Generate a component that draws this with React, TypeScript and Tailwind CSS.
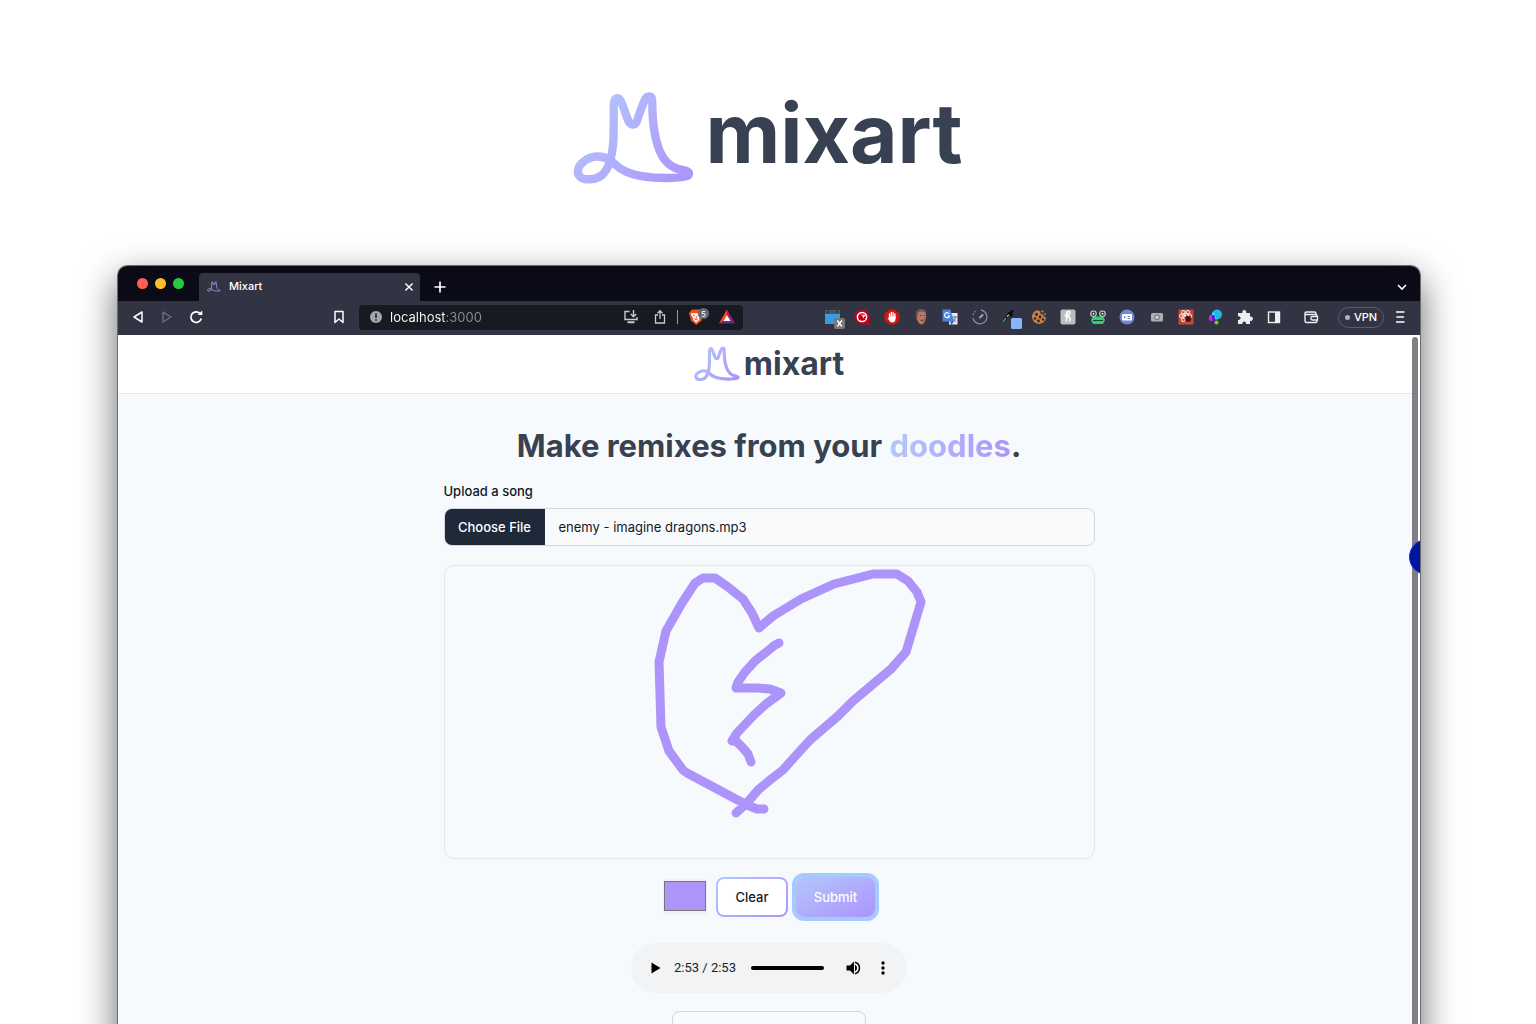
import React, { useId } from "react";

const LOGO_PATH =
  "M162 75C161 110 163 150 160 190C157 225 150 262 128 282C110 298 80 299 66 292C48 282 52 258 72 243C95 224 128 224 150 238C163 247 172 262 200 274C240 291 290 293 335 292C362 291 387 288 387 280C387 271 372 269 357 266C330 259 308 238 295 200C279 155 277 110 277 62C277 44 263 44 255 58C244 82 238 102 231 122C226 136 212 135 206 122C198 104 193 84 184 64C177 47 162 50 162 75Z";

function Logo({ className }: { className: string }) {
  const id = useId();
  return (
    <svg viewBox="40 32 362 280" className={className} fill="none" aria-hidden="true">
      <defs>
        <linearGradient id={id} x1="80" y1="60" x2="380" y2="310" gradientUnits="userSpaceOnUse">
          <stop stopColor="#b4c6fc" />
          <stop offset="1" stopColor="#ac94fa" />
        </linearGradient>
      </defs>
      <path d={LOGO_PATH} stroke={`url(#${id})`} strokeWidth="25" strokeLinejoin="round" />
    </svg>
  );
}

function IconButton({ label, children }: { label: string; children: React.ReactNode }) {
  return (
    <button aria-label={label} className="flex size-5 shrink-0 items-center justify-center">
      {children}
    </button>
  );
}

function Svg({ children, className = "size-5" }: { children: React.ReactNode; className?: string }) {
  return (
    <svg viewBox="0 0 20 20" className={className} fill="none" aria-hidden="true">
      {children}
    </svg>
  );
}

const extensions: { name: string; art: React.ReactNode }[] = [
  {
    name: "Window resizer",
    art: (
      <>
        <rect x="2" y="3" width="15" height="14" fill="#3b9be0" />
        <rect x="2" y="3" width="15" height="4" fill="#4d565e" />
        <path d="M5 4v2M14 4v2" stroke="#22282e" strokeWidth="1.5" />
        <rect x="11" y="11" width="11" height="11" rx="2" fill="#777" />
        <path d="M14.300 13.500l4.600 6M18.900 13.500l-4.600 6" stroke="#fff" strokeWidth="1.300" />
      </>
    ),
  },
  {
    name: "Capture",
    art: (
      <>
        <path d="M10 2.500a7.500 7.500 0 1 1 0 15a7.500 7.500 0 0 1 0-15zM10 10h7.500v7.500H10z" fill="#c4001a" />
        <circle cx="10" cy="10" r="4.600" stroke="#fff" strokeWidth="1.500" />
        <path d="M7 7.500l3.500 1 .5 3 2.500-3.500z" fill="#fff" />
      </>
    ),
  },
  {
    name: "Ad blocker",
    art: (
      <>
        <path d="M7 2.500h6L17.500 7v6L13 17.500H7L2.500 13V7z" fill="#d31414" />
        <path d="M7.500 11V7M9.300 10V5.500M11.100 10V5.500M12.900 11V7" stroke="#fff" strokeWidth="1.300" strokeLinecap="round" />
        <path d="M6.900 9.500h6.600v3q-.5 3-3.300 3-2 0-3.300-2.500l-1.500-2 1.500.2z" fill="#fff" />
      </>
    ),
  },
  {
    name: "Portrait",
    art: (
      <>
        <path d="M5 7c0-4 3-5 6-4.500 3 0 4.500 2 4 5.500 0 5-1.500 9-4.500 9.500C7 17 5 11 5 7z" fill="#b57a66" />
        <path d="M5 8c-.5-4 2-6 5-6 3 0 5 2 5 4-3-2-6-2-8 0l-.5 6z" fill="#74564d" />
        <path d="M9 8.500h1.500M12.500 8.500H14M9.500 13q2 1.500 4-.5" stroke="#613a33" />
      </>
    ),
  },
  {
    name: "Translate",
    art: (
      <>
        <path d="M9 6h8.500v11.500H9z" fill="#e6e8ec" />
        <path d="M12 10h5M14.500 9v1.500M16 10q-1 4-4 5M13 11.500l3 3.500" stroke="#777f8b" />
        <path d="M2.500 2.500h8l3.500 12H2.500z" fill="#4c83df" />
        <path d="M10 14.500h4l-2.500 3z" fill="#2458ad" />
        <path d="M9.300 7A2.500 2.500 0 1 0 9.500 9H7.500" stroke="#fff" strokeWidth="1.200" />
      </>
    ),
  },
  {
    name: "Speed",
    art: (
      <>
        <path d="M11 3a7 7 0 1 1-8 8" stroke="#8e9098" strokeWidth="1.300" />
        <path d="M3 8a7 7 0 0 1 4-4.500" stroke="#8e9098" strokeWidth="1.300" strokeDasharray="1.500 1.500" />
        <path d="M10 10.500L12.500 8" stroke="#a4a6ad" strokeWidth="2" strokeLinecap="round" />
      </>
    ),
  },
  {
    name: "Colour picker",
    art: (
      <>
        <path d="M4 15l7-9" stroke="#111" strokeWidth="2.500" />
        <path d="M4 15l3-4" stroke="#2dbd55" strokeWidth="1.300" />
        <path d="M8 10l2-2.500" stroke="#d5d8dc" strokeWidth="1.200" />
        <path d="M9.500 5.500l4 3.500M11.500 6l2.500-2.500" stroke="#0b0c10" strokeWidth="2.500" />
        <rect x="12" y="11" width="11" height="11" rx="1.500" fill="#8ab4f8" />
      </>
    ),
  },
  {
    name: "Cookies",
    art: (
      <>
        <path d="M9 3a7 7 0 1 0 8 7c-2 .3-3-1-2.500-2.500C12 8 10.500 6 11.500 4 10 4 9 4 9 3z" fill="#c47f4e" />
        <g fill="#37251f">
          <circle cx="7.500" cy="7.500" r="1.400" /><circle cx="11" cy="10" r="1.400" /><circle cx="6" cy="11.500" r="1.300" />
          <circle cx="9.500" cy="14" r="1.400" /><circle cx="14" cy="12.500" r="1.200" />
        </g>
        <g fill="#c47f4e">
          <circle cx="13.500" cy="4.500" r="1.100" /><circle cx="16" cy="7" r="1" />
        </g>
      </>
    ),
  },
  {
    name: "Coupons",
    art: (
      <>
        <rect x="2.500" y="2.500" width="15" height="15" rx="2" fill="#bebebe" />
        <path d="M8.500 14.500V7q0-2.500 2-2.500T11.500 7Q10.500 8.500 6.500 8.500M8.500 11q3.500-2.500 3.500.5v3" stroke="#fff" strokeWidth="1.500" />
      </>
    ),
  },
  {
    name: "Frog",
    art: (
      <>
        <path d="M5 9.500h10l2 3.500-2 4H5l-2-4z" fill="#36cc72" />
        <path d="M5 13.500h10" stroke="#13442a" strokeWidth="1.200" />
        <circle cx="5.500" cy="6.800" r="3.300" fill="#c9d8ce" /><circle cx="14.500" cy="6.800" r="3.300" fill="#c9d8ce" />
        <circle cx="5.500" cy="6.800" r="2.200" fill="#263238" /><circle cx="14.500" cy="6.800" r="2.200" fill="#263238" />
        <circle cx="5.500" cy="6.800" r="1" fill="#e8eeea" /><circle cx="14.500" cy="6.800" r="1" fill="#e8eeea" />
      </>
    ),
  },
  {
    name: "Cards",
    art: (
      <>
        <circle cx="10" cy="10" r="7.500" fill="#7088d2" />
        <rect x="5" y="7" width="10" height="6.500" rx="1" fill="#fff" />
        <path d="M7 9l2 1.200L7 11.500z" fill="#5069b3" />
        <path d="M10.500 9.500h2.500M10.500 11.500h2.500" stroke="#5069b3" strokeWidth=".8" />
      </>
    ),
  },
  {
    name: "Camera",
    art: (
      <>
        <rect x="4" y="6" width="12" height="8.500" rx="1.500" fill="#b0b0b0" />
        <circle cx="10" cy="10.200" r="2.400" stroke="#808080" strokeWidth="1.200" /><circle cx="10" cy="10.200" r="1.300" fill="#d8d8d8" />
      </>
    ),
  },
  {
    name: "React tools",
    art: (
      <>
        <rect x="2.500" y="2.500" width="15" height="15" fill="#d0453a" />
        <g stroke="#f9dfdb" strokeWidth="1.100">
          <ellipse cx="9.500" cy="9" rx="6" ry="2.500" /><ellipse cx="9.500" cy="9" rx="6" ry="2.500" transform="rotate(60 9.500 9)" /><ellipse cx="9.500" cy="9" rx="6" ry="2.500" transform="rotate(120 9.500 9)" />
        </g>
        <ellipse cx="12" cy="12" rx="2.500" ry="3" fill="#301617" />
        <path d="M8.500 12h7M9 9.500l6 5M9 14.500l6-5" stroke="#301617" />
        <circle cx="9" cy="8.500" r="1.200" fill="#fff" />
      </>
    ),
  },
  {
    name: "Palette",
    art: (
      <>
        <circle cx="12" cy="7.500" r="5" fill="#22b8e8" />
        <path d="M8 4.500a5 5 0 0 0 4 8z" fill="#52dfe2" />
        <circle cx="7" cy="11" r="3.200" fill="#d81ddd" /><path d="M7 8a3 3 0 0 1 0 6z" fill="#3c25e8" />
        <circle cx="11.500" cy="15.500" r="2" fill="#72cf2c" />
      </>
    ),
  },
  {
    name: "Extensions",
    art: (
      <path d="M3 6h4.500C6.500 2 12 2 11.200 6H15v3.500c4-.5 4 5 0 4.500v3h-4c.5-3.500-4-3.500-3.600 0H3v-4c3.500.5 3.500-4 0-3.600z" fill="#eeeef1" />
    ),
  },
  {
    name: "Side panel",
    art: (
      <>
        <rect x="4.500" y="5" width="11" height="10.500" stroke="#f1f1f3" strokeWidth="1.400" />
        <path d="M11 5h4.500v10.500H11z" fill="#f1f1f3" />
      </>
    ),
  },
];

function TabStrip() {
  return (
    <div className="flex h-[35px] items-end bg-[#0b0b17] pr-3">
      <div className="flex h-[35px] items-center gap-[7px] pl-[19px]">
        <span className="size-[11px] rounded-full bg-[#ff5f57]" />
        <span className="size-[11px] rounded-full bg-[#febc2e]" />
        <span className="size-[11px] rounded-full bg-[#28c840]" />
      </div>
      <div className="ml-[15px] flex h-7 w-[221px] items-center rounded-t-[4px] bg-[#323443] pr-px pl-2">
        <Logo className="w-[14px] opacity-80" />
        <span className="ml-2 flex-1 text-[11px] font-medium text-white">Mixart</span>
        <IconButton label="Close tab">
          <Svg className="size-4"><path d="M5.500 5.500l9 9M14.500 5.500l-9 9" stroke="#fff" strokeWidth="1.800" /></Svg>
        </IconButton>
      </div>
      <div className="flex h-7 flex-1 items-center justify-between pr-px pl-2.5">
        <IconButton label="New tab">
          <Svg><path d="M10 4.500v11M4.500 10h11" stroke="#fff" strokeWidth="1.700" /></Svg>
        </IconButton>
        <div className="-mr-[5px] flex">
          <IconButton label="Search tabs">
            <Svg><path d="M6 8l4 4 4-4" stroke="#fff" strokeWidth="1.600" /></Svg>
          </IconButton>
        </div>
      </div>
    </div>
  );
}

function Toolbar() {
  return (
    <div className="flex h-[34px] items-center bg-[#323443] pb-px">
      <div className="flex items-center gap-[9px] pl-[10px]">
        <IconButton label="Back">
          <Svg><path d="M14 5v10L6 10z" stroke="#fff" strokeWidth="1.500" strokeLinejoin="round" /></Svg>
        </IconButton>
        <IconButton label="Forward">
          <Svg><path d="M6 5v10l8-5z" stroke="#6e707c" strokeWidth="1.300" strokeLinejoin="round" /></Svg>
        </IconButton>
        <IconButton label="Reload">
          <Svg>
            <path d="M14.500 7A5.300 5.300 0 1 0 15.300 11.500" stroke="#fff" strokeWidth="1.700" />
            <path d="M11.500 8h4.800V3.500z" fill="#fff" />
          </Svg>
        </IconButton>
      </div>
      <div className="ml-[123px]">
        <IconButton label="Bookmark">
          <Svg><path d="M6 4.500h8v11l-4-3.500-4 3.500z" stroke="#fff" strokeWidth="1.500" strokeLinejoin="round" /></Svg>
        </IconButton>
      </div>
      <div className="ml-[10px] flex h-[25px] w-[384px] items-center rounded-[4px] bg-[#171a21] pr-[6px] pl-[7px]">
        <Svg>
          <circle cx="10" cy="10" r="6" fill="#a3a5ae" />
          <path d="M10 6.500v4.500M10 12.300v1.500" stroke="#171a21" strokeWidth="1.500" />
        </Svg>
        <input
          aria-label="Address"
          defaultValue="localhost:3000"
          className="ml-1 h-5 min-w-0 flex-1 bg-linear-to-r from-white from-[55px] to-[#8c8e96] to-[56px] bg-clip-text text-[13px] leading-5 text-transparent outline-none"
        />
        <div className="flex items-center gap-[9px]">
          <IconButton label="Install">
            <Svg>
              <path d="M8.500 4.500H4v8h12v-2.500M12.500 3v6.500M9.800 7l2.700 2.700L15.200 7" stroke="#c9cad0" strokeWidth="1.400" />
              <path d="M6.500 15.300h7" stroke="#c9cad0" strokeWidth="2" />
            </Svg>
          </IconButton>
          <IconButton label="Share">
            <Svg><path d="M8 8H5.500v8h9V8H12M10 12V4M7.500 6.200L10 3.700l2.500 2.500" stroke="#c9cad0" strokeWidth="1.300" /></Svg>
          </IconButton>
        </div>
        <span className="ml-[7px] h-[14px] w-px bg-[#9a9ca5]" />
        <div className="ml-[9px] flex items-center gap-[10px]">
          <IconButton label="Brave shields">
            <Svg className="size-5 overflow-visible">
              <path d="M5 2.500h8l3 3.500-1.500 7.500L9.200 18 4 13.500 2 6z" fill="#f4511e" />
              <path d="M4.500 6l2.500.2h4.500L14 6l.5 2-2.500 3 .5 1.500-3.300 3.200L6 12.500l.5-1.500L4 8z" fill="#fff" />
              <path d="M6 8l2 .8M12.500 8l-2 .8M9.200 9v3.500M7.500 12l1.700 1 1.700-1" stroke="#f4511e" strokeWidth="1" />
              <circle cx="16.500" cy="6.500" r="5.600" fill="#606777" />
              <text x="16.500" y="9.500" textAnchor="middle" fill="#fff" fontSize="8" fontFamily="Inter, sans-serif">5</text>
            </Svg>
          </IconButton>
          <IconButton label="Brave rewards">
            <Svg>
              <path d="M10 2.500L2 16.500l8-4.500z" fill="#ff4724" />
              <path d="M10 2.500l8 14-8-4.500z" fill="#9e1f63" />
              <path d="M2 16.500h16L10 11.500z" fill="#662d91" />
              <path d="M10 8l3.500 6h-7z" fill="#fff" />
            </Svg>
          </IconButton>
        </div>
      </div>
      <div className="flex-1" />
      <div className="flex w-[471px] shrink-0">
        {extensions.map((e) => (
          <button key={e.name} aria-label={e.name} className="flex flex-1 items-center justify-center">
            <Svg className="size-5 overflow-visible">{e.art}</Svg>
          </button>
        ))}
      </div>
      <div className="flex items-center pr-[10px] pl-3">
        <IconButton label="Wallet">
          <Svg>
            <path d="M15 7V6.500q0-1.500-1.500-1.500h-8Q4 5 4 6.200T5.500 7.500H14.500q1.500 0 1.500 1.500v5q0 1.500-1.500 1.500h-9Q4 15.500 4 14V6.500" stroke="#eeeef1" strokeWidth="1.400" />
            <path d="M16.500 9.500h-5a1.600 1.600 0 0 0 0 3.500h5z" fill="#323443" stroke="#eeeef1" strokeWidth="1.300" />
          </Svg>
        </IconButton>
        <button className="ml-[17px] flex h-[21px] w-[46px] items-center justify-center gap-1 rounded-full border border-[#5c5e6b] text-[11px] font-medium text-white">
          <span className="size-[5px] rounded-full bg-[#b0b2bd]" />
          VPN
        </button>
        <div className="ml-[6px]">
          <IconButton label="Menu">
            <Svg><path d="M6 5h8.500M6.500 10h7.500M6 15h8.500" stroke="#fff" strokeWidth="1.500" /></Svg>
          </IconButton>
        </div>
      </div>
    </div>
  );
}

function Doodle() {
  return (
    <svg viewBox="445 566 649 292" className="block w-full" fill="none" stroke="#ac94fa" strokeWidth="9" strokeLinecap="round" strokeLinejoin="round" role="img" aria-label="Broken heart doodle">
      <path d="M764 809L757 809L747 805L687 773L683 770L669 751L661 727L659 662L666 631L682 603L695 583L703 578L715 578L728 587L743 599L752 613L759 628L773 616L801 599L834 584L873 574L897 574L908 581L917 592L921 602L906 652L891 669L853 701L838 716L810 740L790 762L783 770L770 780L758 790L747 803L736 813" />
      <path d="M779 643l-4 2-20 16-10 11-7 10-2 6h21l13 1 11 4-15 11-12 11-17 18-5 8h4l7 7 5 6 3 8" />
    </svg>
  );
}

function Player() {
  return (
    <div className="mt-[22px] flex h-[50px] w-[276px] items-center rounded-full bg-[#f1f3f4] pr-[14px] pl-[14px]">
      <IconButton label="Play">
        <Svg><path d="M6.500 4.500v11l9-5.500z" fill="#000" /></Svg>
      </IconButton>
      <span className="ml-[9px] font-[Roboto,sans-serif] text-[13px] text-[#222]">2:53 / 2:53</span>
      <input type="range" aria-label="Seek" min={0} max={173} defaultValue={173} className="mx-[15px] h-1 min-w-0 flex-1 appearance-none rounded-full bg-black [&::-webkit-slider-thumb]:size-0 [&::-webkit-slider-thumb]:appearance-none" />
      <div className="ml-1 flex items-center gap-[10px]">
        <IconButton label="Mute">
          <Svg>
            <path d="M3.500 7.500v5H7l4 4V3.500l-4 4z" fill="#000" />
            <path d="M12 6.500q2 1 2 3.500t-2 3.500z" fill="#000" />
            <path d="M12 4.200a6 6 0 0 1 0 11.600" stroke="#000" strokeWidth="1.500" />
          </Svg>
        </IconButton>
        <IconButton label="More options">
          <Svg><circle cx="10" cy="5" r="1.700" fill="#000" /><circle cx="10" cy="10" r="1.700" fill="#000" /><circle cx="10" cy="15" r="1.700" fill="#000" /></Svg>
        </IconButton>
      </div>
    </div>
  );
}

export default function App() {
  return (
    <div className="flex h-screen flex-col overflow-hidden bg-white font-[Inter,sans-serif]">
      <div className="flex shrink-0 items-start justify-center gap-[11px] pt-[84px] pb-20">
        <Logo className="mt-[7px] w-[121px]" />
        <span className="text-[82px] leading-[100px] font-bold text-[#374151]">mixart</span>
      </div>

      <div className="mr-[115px] ml-[117px] flex flex-1 flex-col rounded-t-[10px] shadow-[0_14px_36px_rgba(0,0,0,0.6)]">
        <div className="relative flex flex-1 flex-col overflow-hidden rounded-t-[10px] border border-b-0 border-[#6b6b70] bg-[#f7fafd]">
          <TabStrip />
          <Toolbar />
          <header className="flex h-[59px] shrink-0 items-center justify-center gap-1 border-b border-gray-200 bg-white">
            <Logo className="w-[46px]" />
            <span className="text-[32px] leading-10 font-bold text-[#374151]">mixart</span>
          </header>
          <main className="mx-auto flex w-[651px] flex-col items-center pt-8">
            <h1 className="text-[31px] leading-10 font-bold whitespace-nowrap text-[#374151]">
              Make remixes from your{" "}
              <span className="bg-linear-to-r from-[#b4c6fc] to-[#ac94fa] bg-clip-text text-transparent">doodles</span>.
            </h1>
            <label htmlFor="song" className="mt-[15px] self-start text-[13px] leading-5 font-medium text-gray-900">
              Upload a song
            </label>
            <label className="mt-[7px] flex h-[38px] w-full items-stretch overflow-hidden rounded-lg border border-gray-300 bg-gray-50 text-[13px] leading-[37px] text-gray-900">
              <input id="song" type="file" accept="audio/*" className="sr-only" />
              <span className="w-[100px] bg-gray-800 text-center font-medium text-white">Choose File</span>
              <span className="pl-[14px]">enemy - imagine dragons.mp3</span>
            </label>
            <div className="mt-[19px] w-full overflow-hidden rounded-[10px] border border-gray-200">
              <Doodle />
            </div>
            <div className="mt-[14px] flex h-12 items-center">
              <input
                type="color"
                aria-label="Brush colour"
                defaultValue="#ac94fa"
                className="mr-[9px] h-9 w-11 appearance-none rounded-[4px] bg-[#f1f1f1] px-px pt-[2px] pb-1 [&::-webkit-color-swatch]:rounded-none [&::-webkit-color-swatch]:border [&::-webkit-color-swatch]:border-[#777] [&::-webkit-color-swatch-wrapper]:p-0"
              />
              <div className="rounded-lg bg-linear-to-br from-[#b4c6fc] to-[#ac94fa] p-[2px]">
                <button className="block h-9 w-[68px] rounded-md bg-white text-[13px] leading-[37px] font-medium text-gray-900">Clear</button>
              </div>
              <button className="ml-2 h-10 w-[79px] rounded-lg bg-linear-to-br from-[#b4c6fc] to-[#ac94fa] text-[13px] leading-[41px] font-medium text-white ring-4 ring-[#a4cafe]">Submit</button>
            </div>
            <Player />
            <div className="mt-[18px] h-12 w-[194px] rounded-lg border border-gray-300 bg-[#f9fafb]" />
          </main>
          <div className="absolute top-[69px] right-0 bottom-0 w-2 bg-white">
            <div className="mt-[2px] h-full w-[6px] rounded-full bg-[#808084]" />
          </div>
          <div className="absolute top-[273px] -right-[25px] size-9 rounded-full border border-[#1a2be0] bg-[#00149c]" />
        </div>
      </div>
    </div>
  );
}
